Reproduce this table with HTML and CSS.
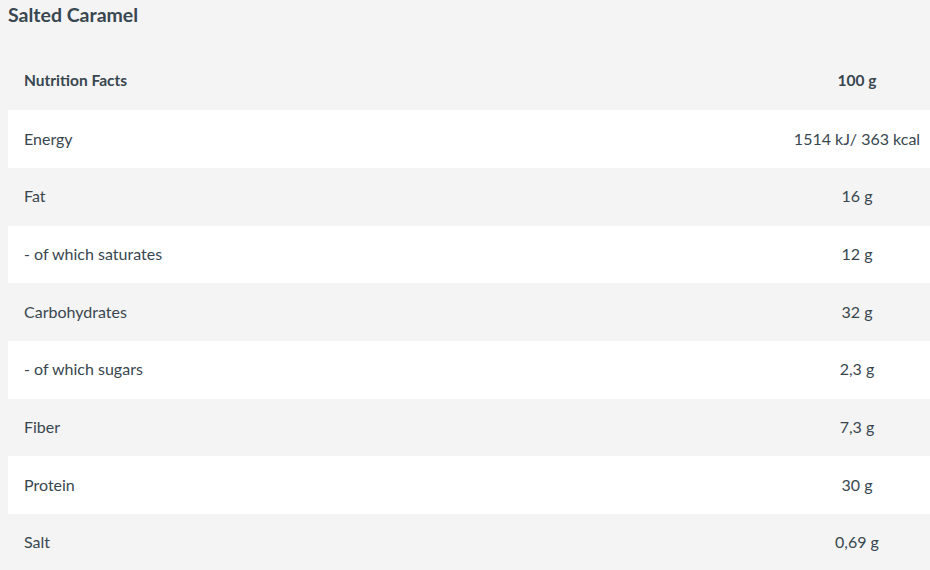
FILE: index.html
```html
<!DOCTYPE html>
<html>
<head>
<meta charset="utf-8">
<link rel="stylesheet" href="styles.css">
</head>
<body>
<h2 class="title">Salted Caramel</h2>
<div class="table">
  <div class="row head"><div class="name">Nutrition Facts</div><div class="val">100 g</div></div>
  <div class="row"><div class="name">Energy</div><div class="val">1514 kJ/ 363 kcal</div></div>
  <div class="row"><div class="name">Fat</div><div class="val">16 g</div></div>
  <div class="row"><div class="name">- of which saturates</div><div class="val">12 g</div></div>
  <div class="row"><div class="name">Carbohydrates</div><div class="val">32 g</div></div>
  <div class="row"><div class="name">- of which sugars</div><div class="val">2,3 g</div></div>
  <div class="row"><div class="name">Fiber</div><div class="val">7,3 g</div></div>
  <div class="row"><div class="name">Protein</div><div class="val">30 g</div></div>
  <div class="row"><div class="name">Salt</div><div class="val">0,69 g</div></div>
</div>
</body>
</html>
```
FILE: styles.css
```css
html, body {
  margin: 0;
  padding: 0;
  background: #f4f4f4;
  overflow: hidden;
}
body {
  padding: 0 0 0 8px;
  font-family: Lato, "Open Sans", sans-serif;
  color: #38474f;
}
.title {
  margin: 0;
  padding-top: 3px;
  font-size: 19.5px;
  font-weight: 700;
  line-height: 24px;
  height: 49.5px;
}
.table {
  display: flex;
  flex-direction: column;
}
.row {
  display: grid;
  grid-template-columns: 1fr 146px;
  align-items: center;
  height: 57.7px;
  font-size: 16px;
  padding-bottom: 2px;
  box-sizing: border-box;
}
.row:nth-child(even) {
  background: #ffffff;
}
.row.head {
  font-weight: 700;
  font-size: 15.5px;
}
.name {
  padding-left: 16px;
}
.val {
  text-align: center;
  white-space: nowrap;
}
```
